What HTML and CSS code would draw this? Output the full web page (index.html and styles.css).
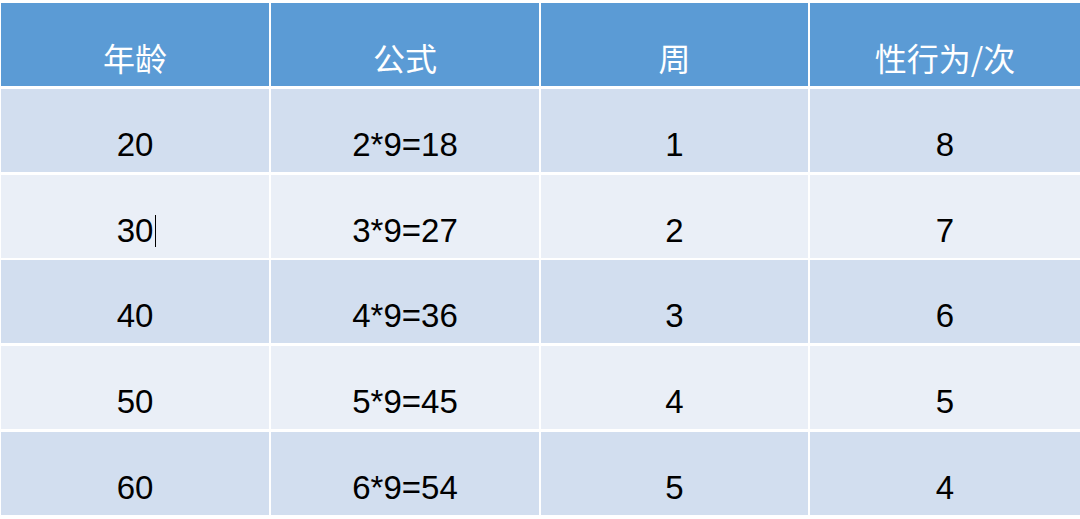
FILE: index.html
```html
<!DOCTYPE html>
<html lang="zh-CN">
<head>
<meta charset="utf-8">
<title>年龄 公式 周 性行为/次</title>
<link rel="stylesheet" href="styles.css">
</head>
<body>
<div class="table">
  <div class="cell head">年龄</div>
  <div class="cell head">公式</div>
  <div class="cell head">周</div>
  <div class="cell head">性行为/次</div>

  <div class="cell odd">20</div>
  <div class="cell odd">2*9=18</div>
  <div class="cell odd">1</div>
  <div class="cell odd">8</div>

  <div class="cell even">30<span class="caret"></span></div>
  <div class="cell even">3*9=27</div>
  <div class="cell even">2</div>
  <div class="cell even">7</div>

  <div class="cell odd">40</div>
  <div class="cell odd">4*9=36</div>
  <div class="cell odd">3</div>
  <div class="cell odd">6</div>

  <div class="cell even">50</div>
  <div class="cell even">5*9=45</div>
  <div class="cell even">4</div>
  <div class="cell even">5</div>

  <div class="cell odd">60</div>
  <div class="cell odd">6*9=54</div>
  <div class="cell odd">5</div>
  <div class="cell odd">4</div>
</div>
</body>
</html>
```

FILE: styles.css
```css
html, body {
  margin: 0;
  padding: 0;
  background: #ffffff;
}

body {
  width: 1080px;
  height: 519px;
  overflow: hidden;
}

.table {
  display: grid;
  grid-template-columns: 268px 268px 267px 270px;
  grid-auto-rows: 83px;
  column-gap: 2px;
  row-gap: 2.8px;
  padding: 3px 0 0 1px;
}

.cell {
  box-sizing: border-box;
  text-align: center;
  white-space: nowrap;
  color: #000000;
  font-family: "Liberation Sans", Arial, "Noto Sans CJK SC", sans-serif;
  font-size: 33px;
  line-height: 33px;
  padding-top: 39px;
}

.head {
  background: #5b9bd5;
  color: #ffffff;
  font-family: "Noto Sans CJK SC", "Noto Sans", sans-serif;
  font-size: 32px;
  line-height: 32px;
  padding-top: 38px;
}

.odd {
  background: #d2deef;
}

.even {
  background: #eaeff7;
}

.caret {
  display: inline-block;
  width: 1px;
  height: 32px;
  background: #000000;
  vertical-align: -5px;
  margin-left: 2px;
  margin-right: -3px;
}
```
